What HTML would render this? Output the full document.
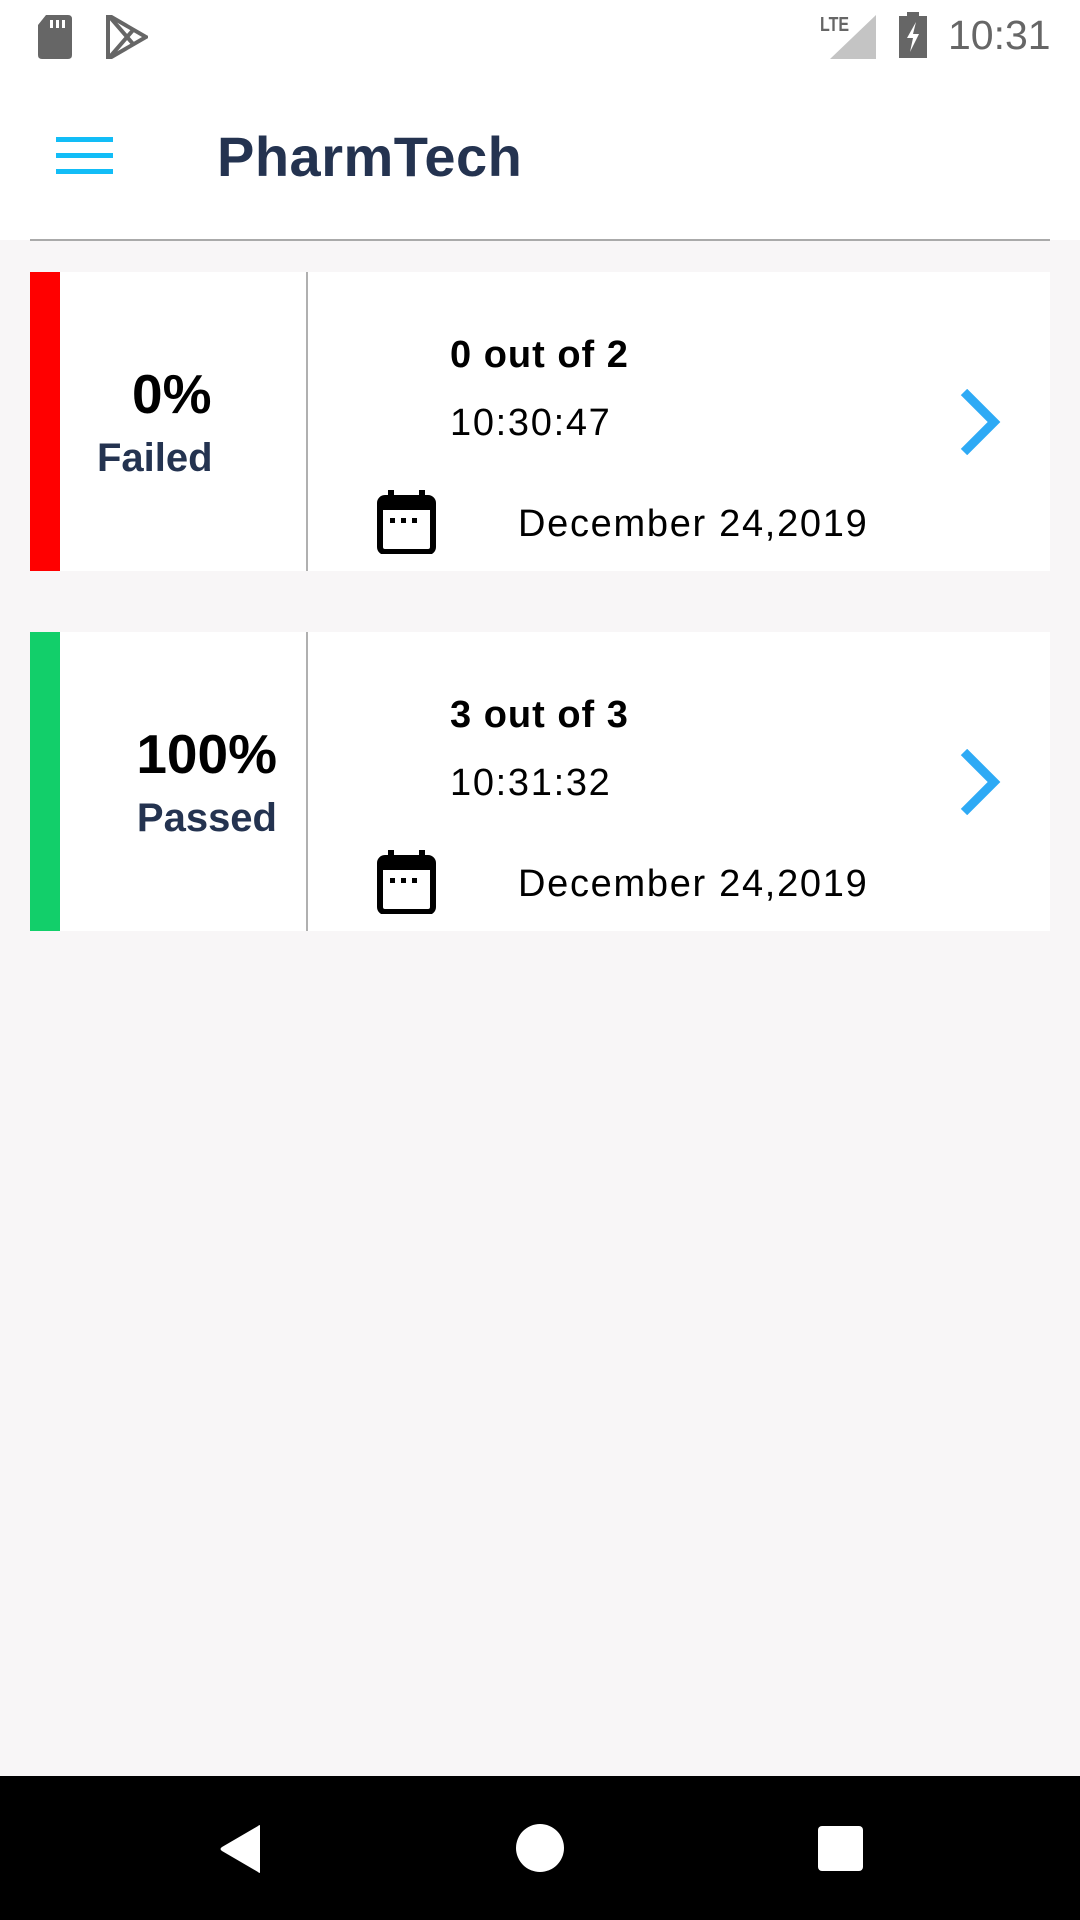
<!DOCTYPE html>
<html><head><meta charset="utf-8"><style>
*{margin:0;padding:0;box-sizing:border-box}
body{width:1080px;height:1920px;background:#f8f6f7;font-family:"Liberation Sans",sans-serif;position:relative;overflow:hidden}
.a{position:absolute;white-space:nowrap}
.hdr{position:absolute;left:0;top:0;width:1080px;height:240px;background:#fff}
.card{position:absolute;left:30px;width:1020px;height:299px;background:#fff}
.bar{position:absolute;left:0;top:0;width:30px;height:299px}
.vd{position:absolute;left:276px;top:0;width:2px;height:299px;background:#b0b0b0}
.pct{font-size:55px;font-weight:bold;color:#000}
.lbl{font-size:40px;font-weight:bold;color:#243350}
.t1{font-size:38px;font-weight:bold;color:#000;letter-spacing:1px}
.t2{font-size:38px;color:#000;letter-spacing:1.7px}
</style></head><body>
<div class="hdr"></div>
<svg class="a" style="left:36px;top:15px" width="38" height="44" viewBox="0 0 38 44"><path d="M10 0H32Q36 0 36 4V40Q36 44 32 44H6Q2 44 2 40V10Z" fill="#666"/><rect x="14" y="5" width="3" height="8" fill="#fff"/><rect x="20" y="5" width="3" height="8" fill="#fff"/><rect x="26" y="5" width="3" height="8" fill="#fff"/></svg>
<svg class="a" style="left:106px;top:15px" width="42" height="44" viewBox="0 0 42 44"><path d="M2 0L40 22L2 44Z" fill="none" stroke="#666" stroke-width="4"/><path d="M2 0L28 30M2 44L28 14" stroke="#666" stroke-width="4"/></svg>
<div class="a" style="left:820px;top:14px;font-size:20px;font-weight:bold;color:#666;transform:scaleX(.8);transform-origin:left">LTE</div>
<svg class="a" style="left:830px;top:15px" width="46" height="44"><path d="M46 0V44H0Z" fill="#c4c4c4"/></svg>
<svg class="a" style="left:898px;top:12px" width="30" height="46" viewBox="0 0 30 46"><rect x="9" y="0" width="12" height="5" fill="#666"/><rect x="1" y="4" width="28" height="42" fill="#666"/><path d="M18 10L9 26H15L12 40L21 22H15Z" fill="#fff"/></svg>
<div class="a" style="left:948px;top:12px;font-size:41px;color:#666">10:31</div>
<div class="a" style="left:56px;top:137px;width:57px;height:5px;background:#12bdf7"></div>
<div class="a" style="left:56px;top:153px;width:57px;height:5px;background:#12bdf7"></div>
<div class="a" style="left:56px;top:169px;width:57px;height:5px;background:#12bdf7"></div>
<div class="a" style="left:217px;top:124px;font-size:56px;font-weight:bold;color:#243350;line-height:66px;letter-spacing:0.5px">PharmTech</div>
<div class="a" style="left:30px;top:239px;width:1020px;height:2px;background:#aaa"></div>

<div class="card" style="top:272px">
 <div class="bar" style="background:#ff0000"></div>
 <div class="vd"></div>
 <div class="a pct" style="left:102px;top:90px">0%</div>
 <div class="a lbl" style="left:67px;top:164px">Failed</div>
 <div class="a t1" style="left:420px;top:62px">0 out of 2</div>
 <div class="a t2" style="left:420px;top:130px">10:30:47</div>
 <svg class="a" style="left:347px;top:218px" width="59" height="64" viewBox="0 0 59 64"><rect x="11" y="0" width="6" height="10" fill="#000"/><rect x="42" y="0" width="6" height="10" fill="#000"/><rect x="3" y="8" width="53" height="54" rx="5" fill="none" stroke="#000" stroke-width="6"/><rect x="3" y="8" width="53" height="12" fill="#000"/><rect x="13" y="28" width="5" height="5" fill="#000"/><rect x="24" y="28" width="5" height="5" fill="#000"/><rect x="35" y="28" width="5" height="5" fill="#000"/></svg>
 <div class="a t2" style="left:488px;top:231px">December 24,2019</div>
 <svg class="a" style="left:928px;top:117px" width="44" height="66" viewBox="0 0 44 66"><path d="M6 3L36 33L6 63" fill="none" stroke="#2eaaf5" stroke-width="9"/></svg>
</div>

<div class="card" style="top:632px">
 <div class="bar" style="background:#12cf6a"></div>
 <div class="vd"></div>
 <div class="a pct" style="right:773px;top:90px">100%</div>
 <div class="a lbl" style="right:773px;top:164px">Passed</div>
 <div class="a t1" style="left:420px;top:62px">3 out of 3</div>
 <div class="a t2" style="left:420px;top:130px">10:31:32</div>
 <svg class="a" style="left:347px;top:218px" width="59" height="64" viewBox="0 0 59 64"><rect x="11" y="0" width="6" height="10" fill="#000"/><rect x="42" y="0" width="6" height="10" fill="#000"/><rect x="3" y="8" width="53" height="54" rx="5" fill="none" stroke="#000" stroke-width="6"/><rect x="3" y="8" width="53" height="12" fill="#000"/><rect x="13" y="28" width="5" height="5" fill="#000"/><rect x="24" y="28" width="5" height="5" fill="#000"/><rect x="35" y="28" width="5" height="5" fill="#000"/></svg>
 <div class="a t2" style="left:488px;top:231px">December 24,2019</div>
 <svg class="a" style="left:928px;top:117px" width="44" height="66" viewBox="0 0 44 66"><path d="M6 3L36 33L6 63" fill="none" stroke="#2eaaf5" stroke-width="9"/></svg>
</div>

<div class="a" style="left:0;top:1776px;width:1080px;height:144px;background:#000"></div>
<svg class="a" style="left:218px;top:1824px" width="46" height="50" viewBox="0 0 46 50"><path d="M42 2V48Q42 50 40 48L4 27Q1 25 4 23L40 2Q42 0 42 2Z" fill="#fff"/></svg>
<div class="a" style="left:516px;top:1824px;width:48px;height:48px;border-radius:50%;background:#fff"></div>
<div class="a" style="left:818px;top:1826px;width:45px;height:45px;border-radius:4px;background:#fff"></div>
</body></html>
